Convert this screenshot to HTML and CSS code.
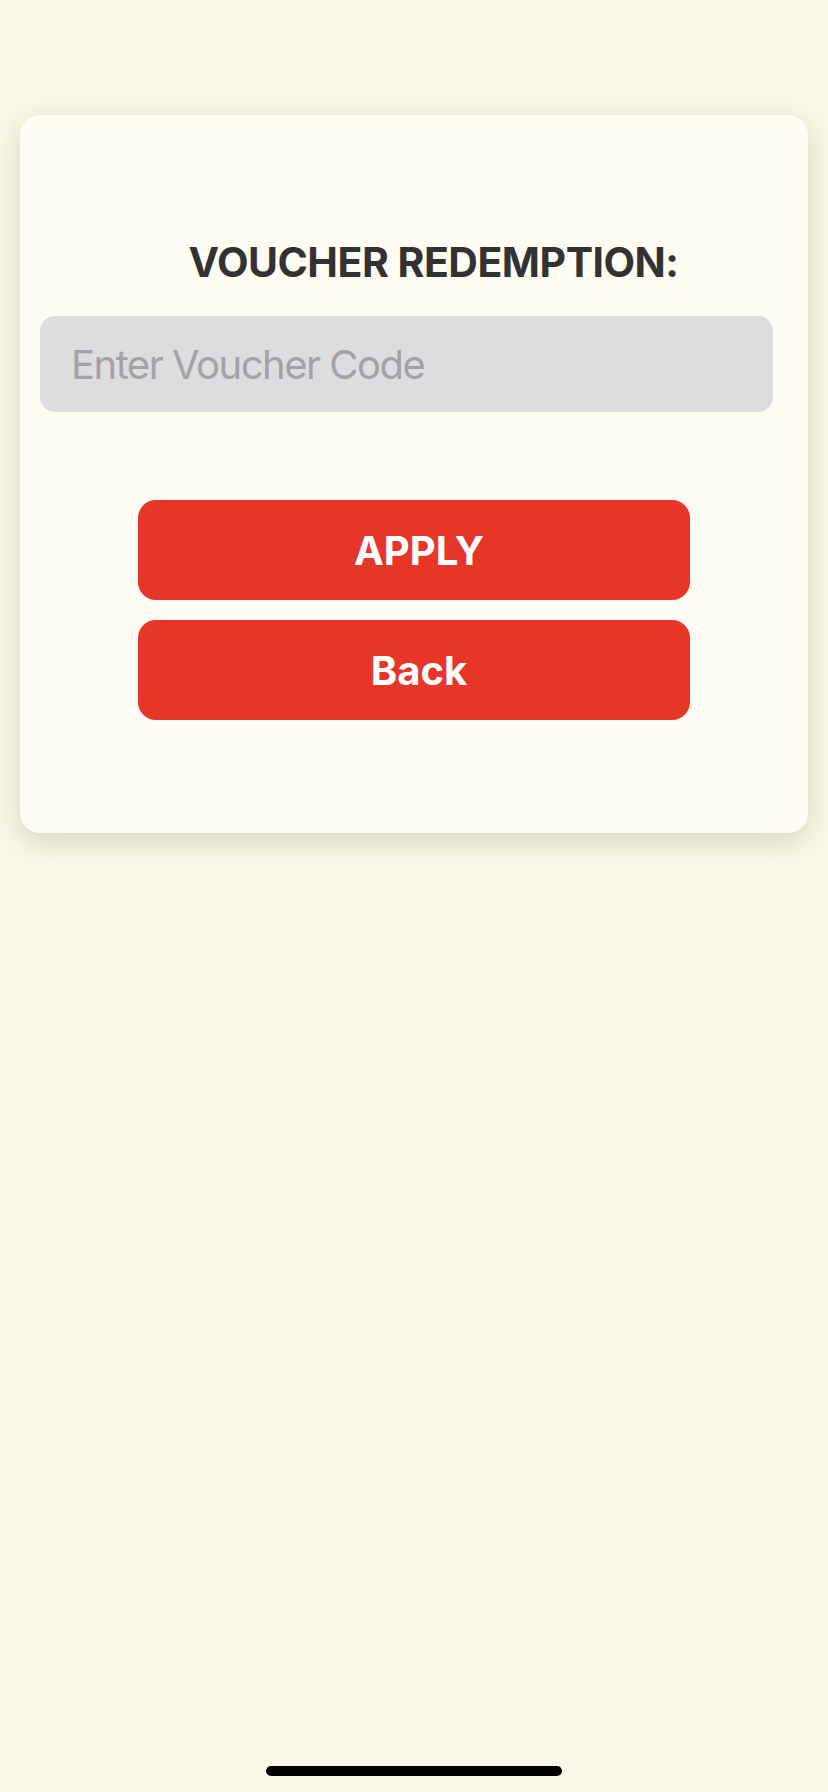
FILE: index.html
```
<!DOCTYPE html>
<html lang="en">
  <head>
    <meta charset="UTF-8" />
    <meta name="viewport" content="width=device-width, initial-scale=1.0" />
    <title>Voucher Redemption</title>
    <link rel="stylesheet" href="styles.css">
  </head>
  <body>
    <div class="page">
      <div class="card">
        <h2 class="title">VOUCHER REDEMPTION:</h2>
        <input type="text" class="voucher-input" placeholder="Enter Voucher Code" />
        <div class="actions">
          <button class="btn">APPLY</button>
          <button class="btn">Back</button>
        </div>
      </div>
      <div class="home-indicator"></div>
    </div>
  </body>
</html>
```

FILE: styles.css
```
* {
  box-sizing: border-box;
}

body {
  margin: 0;
  font-family: Inter, "Noto Sans", Arial, sans-serif;
  background-color: #faf9e9;
}

.page {
  min-height: 100vh;
  display: flex;
  flex-direction: column;
  padding: 115px 20px 16px;
}

.card {
  background: #fffcf3;
  border-radius: 20px;
  box-shadow: 0 8px 30px rgba(120, 90, 40, 0.25);
  padding: 123px 0 113px;
}

.title {
  margin: 0;
  padding-left: 39px;
  text-align: center;
  font-size: 41px;
  line-height: 48px;
  font-weight: 700;
  letter-spacing: -0.5px;
  color: #333232;
}

.voucher-input {
  display: block;
  width: calc(100% - 55px);
  height: 96px;
  margin: 30px 35px 0 20px;
  padding: 0 31px;
  border: none;
  border-radius: 15px;
  background: #dddde0;
  font-family: inherit;
  font-size: 40px;
  letter-spacing: -1.5px;
  color: #333;
  outline: none;
}

.voucher-input::placeholder {
  color: #a3a3a7;
}

.actions {
  display: flex;
  flex-direction: column;
  gap: 20px;
  width: 552px;
  margin: 88px auto 0;
}

.btn {
  height: 100px;
  padding: 0 0 0 10px;
  border: none;
  border-radius: 18px;
  background: #e8352a;
  color: white;
  font-family: inherit;
  font-size: 40px;
  font-weight: 700;
  cursor: pointer;
}

.home-indicator {
  width: 296px;
  height: 10px;
  margin: auto auto 0;
  border-radius: 5px;
  background: #000;
}
```
